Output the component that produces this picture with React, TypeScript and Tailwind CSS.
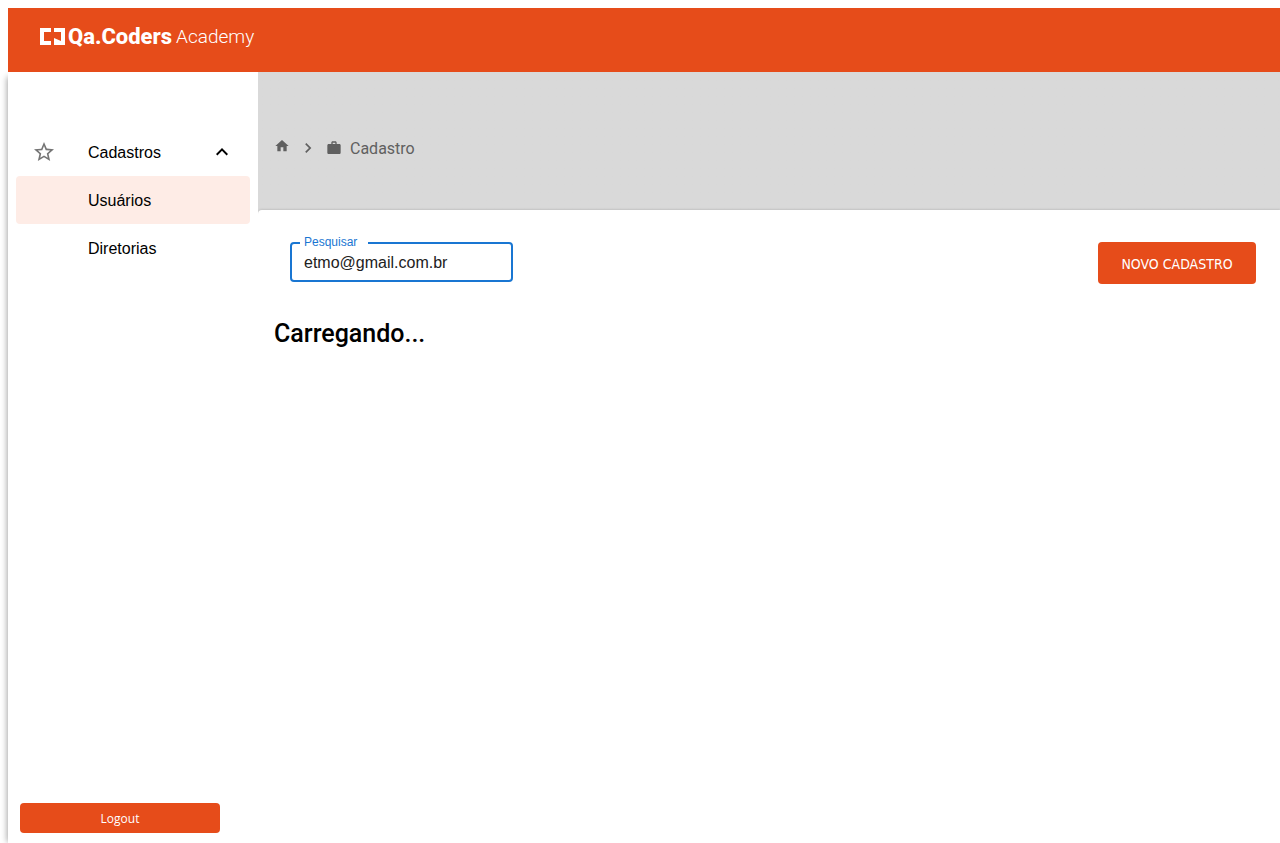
import { useState } from "react";

function Logo() {
  return (
    <a href="#inicio" className="flex h-6 items-center whitespace-nowrap text-white font-['Roboto',sans-serif]">
      <svg className="mr-[3px] h-[17px] w-[25px]" viewBox="0 0 25 17" fill="currentColor" aria-hidden="true">
        <path d="M0 0H11V4H4V13H11V17H0Z" />
        <path d="M14 0H25V17H14V10L21 13V4H14Z" />
      </svg>
      <span className="pt-0.5 text-[22px] leading-6 font-extrabold">Qa.Coders</span>
      <span className="ml-1 pt-0.5 text-[19px] leading-6 font-light">Academy</span>
    </a>
  );
}

function Sidebar() {
  const [open, setOpen] = useState(true);
  return (
    <aside className="relative z-10 flex w-[250px] shrink-0 flex-col justify-between bg-white pt-14 shadow-[-4px_2px_6px_-3px_rgba(0,0,0,0.35)]">
      <nav className="px-2 text-base text-black">
        <button
          type="button"
          aria-expanded={open}
          onClick={() => setOpen(!open)}
          className="flex h-12 w-full items-center pr-4 pl-4 text-left"
        >
          <svg className="size-6 fill-[#757575]" viewBox="0 0 24 24" aria-hidden="true">
            <path d="m22 9.24-7.190-.62L12 2 9.190 8.630 2 9.240l5.460 4.730L5.820 21 12 17.270 18.180 21l-1.630-7.030L22 9.240zM12 15.400l-3.760 2.270 1-4.280-3.320-2.880 4.380-.38L12 6.100l1.710 4.040 4.380.38-3.320 2.880 1 4.280L12 15.400z" />
          </svg>
          <span className="ml-8 grow pt-0.5">Cadastros</span>
          <svg className="size-6" viewBox="0 0 24 24" fill="currentColor" aria-hidden="true">
            <path d="m12 8-6 6 1.410 1.410L12 10.830l4.590 4.580L18 14z" />
          </svg>
        </button>
        {open && (
          <>
            <a href="#usuarios" className="flex h-12 items-center rounded bg-[#feece6] pt-0.5 pl-[72px]">
              Usuários
            </a>
            <a href="#diretorias" className="flex h-12 items-center rounded pt-0.5 pl-[72px]">
              Diretorias
            </a>
          </>
        )}
      </nav>
      <button
        type="button"
        className="mb-[10px] ml-3 h-[30px] w-[200px] rounded bg-[#e64c1a] pt-0.5 text-xs text-white font-['Open_Sans',sans-serif]"
      >
        Logout
      </button>
    </aside>
  );
}

function Breadcrumb() {
  return (
    <nav aria-label="Navegação" className="flex h-[138px] items-center pt-[14px] pl-4 text-[#606060]">
      <a href="#inicio" aria-label="Início" className="mb-1">
        <svg className="size-4" viewBox="0 0 24 24" fill="currentColor" aria-hidden="true">
          <path d="M10 20v-6h4v6h5v-8h3L12 3 2 12h3v8z" />
        </svg>
      </a>
      <svg className="mx-2 size-5" viewBox="0 0 24 24" fill="currentColor" aria-hidden="true">
        <path d="M10 6 8.590 7.410 13.170 12l-4.580 4.590L10 18l6-6z" />
      </svg>
      <a href="#cadastro" className="flex items-center gap-2 text-base font-['Roboto',sans-serif]">
        <svg className="size-4" viewBox="0 0 24 24" fill="currentColor" aria-hidden="true">
          <path d="M20 6h-4V4c0-1.110-.89-2-2-2h-4c-1.110 0-2 .89-2 2v2H4c-1.110 0-1.990.89-1.990 2L2 19c0 1.110.89 2 2 2h16c1.110 0 2-.89 2-2V8c0-1.110-.89-2-2-2zm-6 0h-4V4h4v2z" />
        </svg>
        <span className="pt-0.5">Cadastro</span>
      </a>
    </nav>
  );
}

export default function App() {
  const [search, setSearch] = useState("etmo@gmail.com.br");
  return (
    <div className="flex min-h-screen flex-col overflow-x-hidden bg-white pt-2 pl-2 font-['Liberation_Sans',sans-serif]">
      <header className="relative z-20 h-16 shrink-0 bg-[#e64c1a] pt-4 pl-8">
        <Logo />
      </header>
      <div className="flex grow">
        <Sidebar />
        <div className="flex min-w-0 grow flex-col bg-linear-to-b from-[#d9d9d9] from-[142px] to-white to-[142px]">
          <Breadcrumb />
          <main className="grow rounded-tl bg-white px-4 pt-8 shadow-[0_-1px_2px_rgba(0,0,0,0.1)]">
            <div className="flex items-start justify-between pr-2 pl-4">
              <fieldset className="-mt-2 h-12 w-[223px] rounded border-2 border-[#1976d2] px-2">
                <legend className="h-[18px] w-[68px] px-1 text-xs leading-4 text-[#1976d2]">
                  <label htmlFor="pesquisar">Pesquisar</label>
                </legend>
                <input
                  id="pesquisar"
                  type="text"
                  value={search}
                  onChange={(event) => setSearch(event.target.value)}
                  className="-mt-px block h-6 w-full bg-transparent px-1 text-base text-[#212121] outline-none"
                />
              </fieldset>
              <button
                type="button"
                className="h-[42px] w-[158px] rounded bg-[#e64c1a] pt-0.5 text-sm text-white font-['DejaVu_Sans_Condensed','Noto_Sans',sans-serif]"
              >
                NOVO CADASTRO
              </button>
            </div>
            <h2 className="mt-8 text-[25px] leading-9 font-medium text-black font-['Roboto',sans-serif]">
              Carregando...
            </h2>
          </main>
        </div>
      </div>
    </div>
  );
}
